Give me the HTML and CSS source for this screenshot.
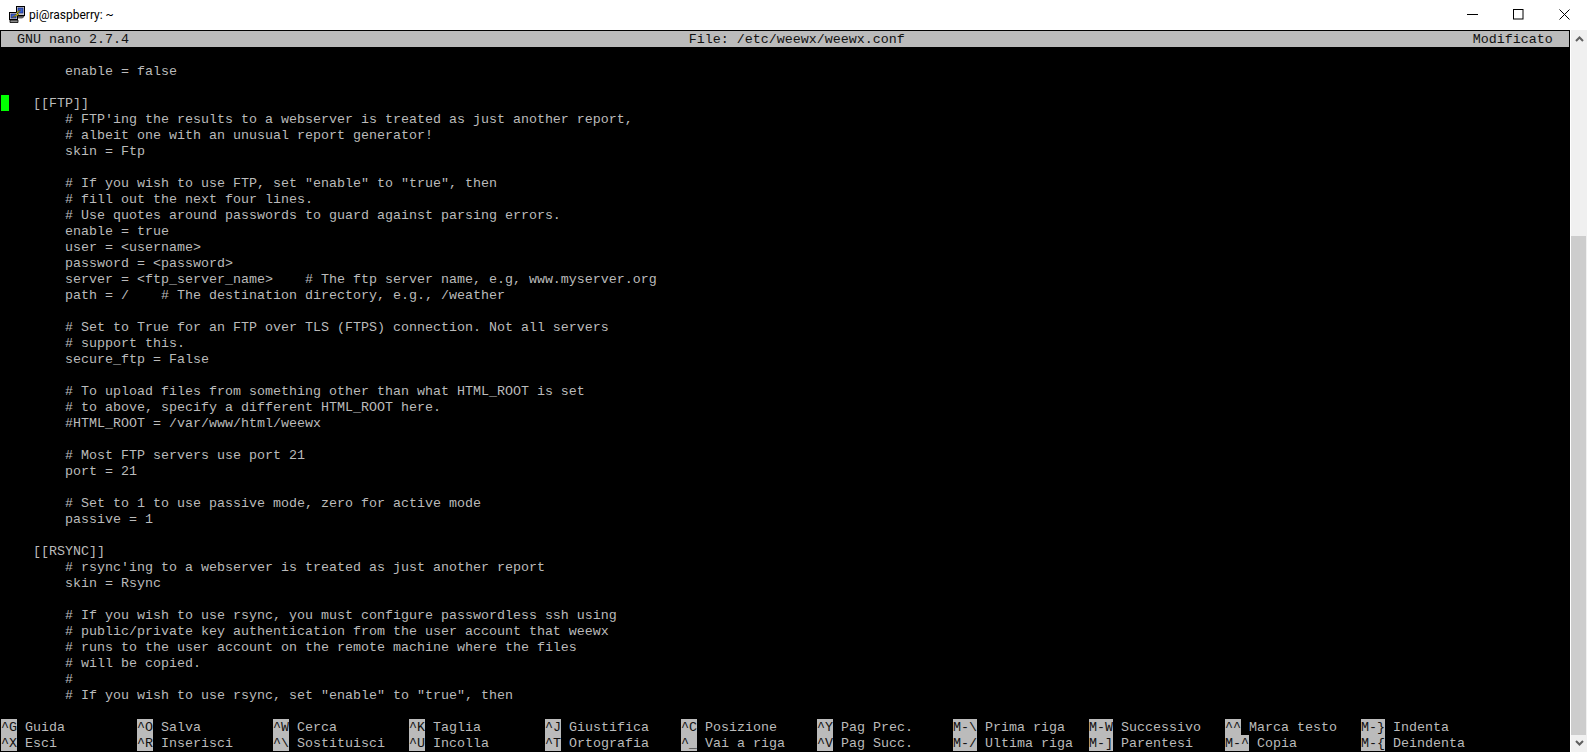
FILE: index.html
```html
<!DOCTYPE html>
<html lang="it">
<head>
<meta charset="utf-8">
<title>pi@raspberry: ~</title>
<link rel="stylesheet" href="styles.css">
</head>
<body>
<header class="titlebar">
  <svg class="appicon" viewBox="0 0 16 17" width="16" height="17">
    <rect x="7.5" y="0.5" width="8" height="9" fill="#c8c8d0" stroke="#000"/>
    <rect x="9" y="2" width="5" height="5" fill="#3a5fd0" stroke="#10206a" stroke-width="0.6"/>
    <path d="M8 10.5h7l-1.500 1.500H7z" fill="#8a8a8a" stroke="#000" stroke-width="0.6"/>
    <rect x="0.500" y="6.500" width="8" height="7" fill="#c8c8d0" stroke="#000"/>
    <rect x="2" y="8" width="5" height="4" fill="#3a5fd0" stroke="#10206a" stroke-width="0.6"/>
    <path d="M1 14h8v2.500H1z" fill="#8a8a8a" stroke="#000" stroke-width="0.8"/>
    <path d="M11.500 4 7.500 6.500l1.500.8L3 11.500l7-2.800-1.500-.9z" fill="#f6e81e" stroke="#5a5200" stroke-width="0.6"/>
  </svg>
  <span class="wintitle">pi@raspberry: ~</span>
  <div class="controls">
    <button class="ctl" aria-label="Riduci a icona"><svg viewBox="0 0 11 11" width="11" height="11"><path d="M0 5.500h11" stroke="#000"/></svg></button>
    <button class="ctl" aria-label="Ingrandisci"><svg viewBox="0 0 11 11" width="11" height="11"><rect x="0.500" y="0.500" width="9.500" height="9.500" fill="none" stroke="#000"/></svg></button>
    <button class="ctl" aria-label="Chiudi"><svg viewBox="0 0 11 11" width="11" height="11"><path d="M0.500 0.500l10 10M10.500 0.500l-10 10" stroke="#000" fill="none"/></svg></button>
  </div>
</header>
<main class="window">
  <section class="terminal">
<pre class="status">  GNU nano 2.7.4                                                                      File: /etc/weewx/weewx.conf                                                                       Modificato</pre>
<pre class="buffer">

        enable = false

<span class="cursor"> </span>   [[FTP]]
        # FTP'ing the results to a webserver is treated as just another report,
        # albeit one with an unusual report generator!
        skin = Ftp

        # If you wish to use FTP, set "enable" to "true", then
        # fill out the next four lines.
        # Use quotes around passwords to guard against parsing errors.
        enable = true
        user = &lt;username&gt;
        password = &lt;password&gt;
        server = &lt;ftp_server_name&gt;    # The ftp server name, e.g, www.myserver.org
        path = /    # The destination directory, e.g., /weather

        # Set to True for an FTP over TLS (FTPS) connection. Not all servers
        # support this.
        secure_ftp = False

        # To upload files from something other than what HTML_ROOT is set
        # to above, specify a different HTML_ROOT here.
        #HTML_ROOT = /var/www/html/weewx

        # Most FTP servers use port 21
        port = 21

        # Set to 1 to use passive mode, zero for active mode
        passive = 1

    [[RSYNC]]
        # rsync'ing to a webserver is treated as just another report
        skin = Rsync

        # If you wish to use rsync, you must configure passwordless ssh using
        # public/private key authentication from the user account that weewx
        # runs to the user account on the remote machine where the files
        # will be copied.
        #
        # If you wish to use rsync, set "enable" to "true", then
</pre>
<div class="shortcuts">
<pre><span class="key">^G</span> Guida</pre><pre><span class="key">^O</span> Salva</pre><pre><span class="key">^W</span> Cerca</pre><pre><span class="key">^K</span> Taglia</pre><pre><span class="key">^J</span> Giustifica</pre><pre><span class="key">^C</span> Posizione</pre><pre><span class="key">^Y</span> Pag Prec.</pre><pre><span class="key">M-\</span> Prima riga</pre><pre><span class="key">M-W</span> Successivo</pre><pre><span class="key">^^</span> Marca testo</pre><pre><span class="key">M-}</span> Indenta</pre>
<pre><span class="key">^X</span> Esci</pre><pre><span class="key">^R</span> Inserisci</pre><pre><span class="key">^\</span> Sostituisci</pre><pre><span class="key">^U</span> Incolla</pre><pre><span class="key">^T</span> Ortografia</pre><pre><span class="key">^_</span> Vai a riga</pre><pre><span class="key">^V</span> Pag Succ.</pre><pre><span class="key">M-/</span> Ultima riga</pre><pre><span class="key">M-]</span> Parentesi</pre><pre><span class="key">M-^</span> Copia</pre><pre><span class="key">M-{</span> Deindenta</pre>
</div>
  </section>
  <aside class="scrollbar">
    <svg class="arrow" viewBox="0 0 9 6" width="9" height="6"><path d="M1 5l3.500-3.500L8 5" fill="none" stroke="#606060" stroke-width="2"/></svg>
    <div class="track"><div class="thumb"></div></div>
    <svg class="arrow" viewBox="0 0 9 6" width="9" height="6"><path d="M1 1l3.500 3.500L8 1" fill="none" stroke="#606060" stroke-width="2"/></svg>
  </aside>
</main>
</body>
</html>
```

FILE: styles.css
```css
* { box-sizing: border-box; }
html, body { margin: 0; height: 100%; overflow: hidden; background: #000; }
body { display: flex; flex-direction: column; width: 1587px; height: 752px; }

.titlebar {
  display: flex;
  align-items: center;
  height: 30px;
  flex: none;
  padding-left: 9px;
  background: #fff;
}
.appicon { flex: none; margin-top: -2px; }
.wintitle {
  margin-left: 4px;
  margin-top: -1px;
  font: 12px Roboto, "Open Sans", sans-serif;
  color: #000;
}
.controls { display: flex; margin-left: auto; height: 100%; }
.ctl {
  display: flex;
  align-items: center;
  justify-content: center;
  width: 46px;
  height: 30px;
  padding: 0 0 1px;
  border: 0;
  background: transparent;
}

.window { display: flex; flex: 1; min-height: 0; }

.terminal {
  width: 1570px;
  padding: 1px 1px 0;
  background: #000;
  color: #bbb;
  font: 13.333px/16px "Liberation Mono", "Courier New", monospace;
}
pre { margin: 0; font: inherit; }
.status { height: 16px; padding-top: 1px; background: #bbb; color: #111; }
.buffer { height: 672px; padding-top: 1px; overflow: hidden; }

/* Highlighted cells fill the whole 16px terminal row; their glyphs sit 1px low in it. */
.cursor, .key {
  display: inline-block;
  height: 16px;
  margin-top: -1px;
  padding-top: 1px;
}
.cursor { background: #0f0; }
.key { background: #bbb; color: #111; }

.shortcuts { display: grid; grid-template-columns: repeat(11, 136px); grid-auto-rows: 16px; }
.shortcuts pre { padding-top: 1px; }

.scrollbar {
  display: flex;
  flex-direction: column;
  align-items: center;
  width: 17px;
  border-left: 1px solid #fff;
  background: #f0f0f0;
}
.arrow { flex: none; margin: 6px 0; }
.track { flex: 1; width: 100%; display: flex; flex-direction: column; justify-content: flex-end; margin-bottom: -1px; }
.thumb { height: 499px; width: 15px; background: #cdcdcd; }
```
